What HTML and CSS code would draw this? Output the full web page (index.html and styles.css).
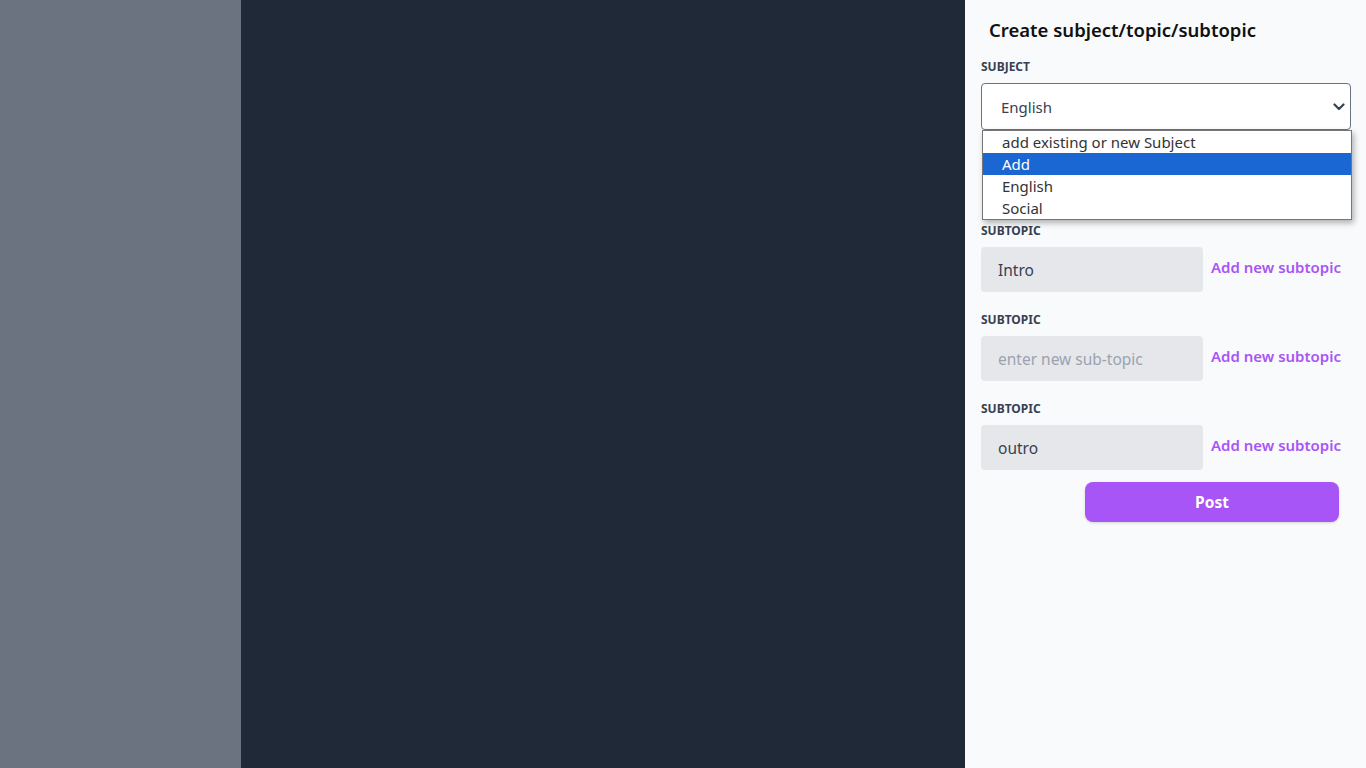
FILE: index.html
```html
<!DOCTYPE html>
<html>
<head>
<meta charset="utf-8">
<link rel="stylesheet" href="styles.css">
</head>
<body>
<div class="app">
  <aside class="sidebar"></aside>
  <main class="canvas"></main>
  <section class="panel">
    <h1 class="title">Create subject/topic/subtopic</h1>
    <div class="field">
      <label class="label">Subject</label>
      <div class="select-wrap">
        <div class="select">
          <span>English</span>
          <svg class="chev" width="12" height="8" viewBox="0 0 12 8"><path d="M1.5 1.5 L6 6 L10.5 1.5" fill="none" stroke="#374151" stroke-width="2.2" stroke-linecap="round" stroke-linejoin="round"/></svg>
        </div>
        <ul class="popup">
          <li>add existing or new Subject</li>
          <li class="active">Add</li>
          <li>English</li>
          <li>Social</li>
        </ul>
      </div>
    </div>
    <div class="topic-spacer"></div>
    <div class="field">
      <label class="label">Subtopic</label>
      <div class="row">
        <div class="input">Intro</div>
        <a class="link">Add new subtopic</a>
      </div>
    </div>
    <div class="field">
      <label class="label">Subtopic</label>
      <div class="row">
        <div class="input placeholder">enter new sub-topic</div>
        <a class="link">Add new subtopic</a>
      </div>
    </div>
    <div class="field">
      <label class="label">Subtopic</label>
      <div class="row">
        <div class="input">outro</div>
        <a class="link">Add new subtopic</a>
      </div>
    </div>
    <div class="actions">
      <button class="post">Post</button>
    </div>
  </section>
</div>
</body>
</html>
```
FILE: styles.css
```css
* { box-sizing: border-box; }
html, body { margin: 0; padding: 0; height: 100%; }
body {
  font-family: "Noto Sans", "Open Sans", sans-serif;
  color: #374151;
}
.app {
  display: flex;
  height: 768px;
  width: 1366px;
}
.sidebar { width: 241px; background: #6b7280; }
.canvas { width: 724px; background: #1f2937; }
.panel {
  width: 401px;
  background: #f9fafb;
  padding: 15px 15px 0 16px;
}
.title {
  margin: 0 0 0 8px;
  font-size: 18.5px;
  font-weight: 600;
  line-height: 30px;
  color: #111111;
  height: 43px;
}
.field { margin-bottom: 19px; }
.label {
  display: block;
  font-size: 12px;
  font-weight: 700;
  text-transform: uppercase;
  line-height: 16px;
  height: 16px;
  margin-bottom: 9px;
  padding-top: 1px;
  color: #374151;
}
.select-wrap { position: relative; }
.select {
  height: 47px;
  border: 1px solid #6b7280;
  border-radius: 4px;
  background: #ffffff;
  display: flex;
  align-items: center;
  justify-content: space-between;
  padding: 0 5px 0 19px;
  font-size: 15px;
  color: #374151;
}
.chev { margin-top: 1px; }
.popup {
  position: absolute;
  top: 47px;
  left: 1px;
  width: 370px;
  margin: 0;
  padding: 0;
  list-style: none;
  background: #ffffff;
  border: 1px solid #767676;
  box-shadow: 2px 3px 6px rgba(0,0,0,0.3);
  z-index: 5;
}
.popup li {
  height: 22px;
  line-height: 22px;
  padding-left: 19px;
  font-size: 15px;
  color: #333333;
}
.popup li.active { background: #1a66d2; color: #ffffff; }
.topic-spacer { height: 73px; }
.row {
  display: flex;
  align-items: center;
  gap: 8px;
}
.input {
  width: 222px;
  height: 45px;
  background: #e5e7eb;
  border-radius: 4px;
  padding-left: 17px;
  display: flex;
  align-items: center;
  font-size: 15.5px;
  color: #374151;
}
.input.placeholder { color: #9ca3af; }
.link {
  font-size: 15px;
  font-weight: 600;
  color: #a855f7;
  margin-top: -6px;
  white-space: nowrap;
}
.actions {
  display: flex;
  justify-content: flex-end;
  padding-right: 12px;
  margin-top: -7px;
}
.post {
  width: 254px;
  height: 40px;
  border: none;
  border-radius: 8px;
  background: #a855f7;
  color: #ffffff;
  font-family: inherit;
  font-size: 15.5px;
  font-weight: 700;
  box-shadow: 0 1px 3px rgba(0,0,0,0.15);
}
```
